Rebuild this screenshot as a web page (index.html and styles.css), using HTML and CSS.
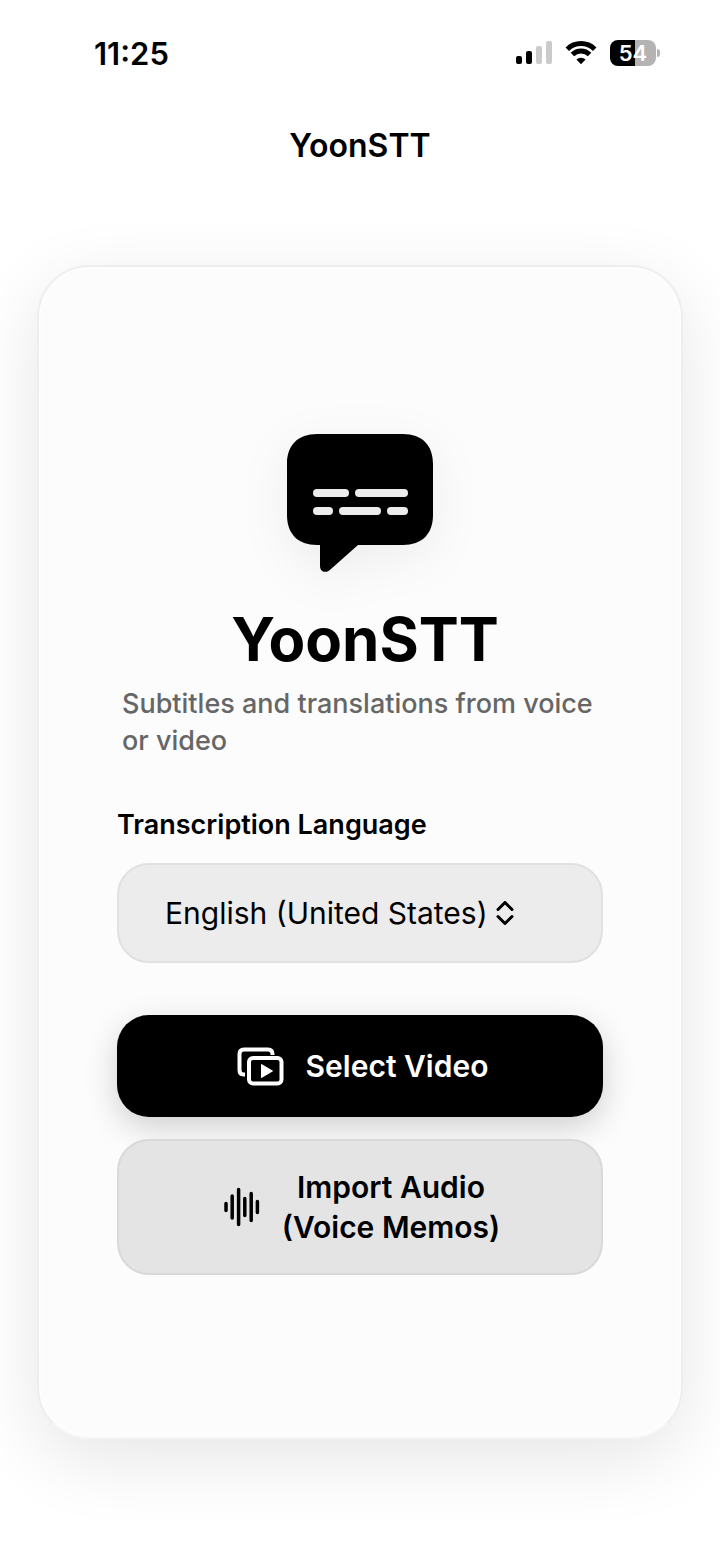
FILE: index.html
```html
<!DOCTYPE html>
<html lang="en">
<head>
    <meta charset="UTF-8">
    <meta name="viewport" content="width=device-width, initial-scale=1.0">
    <title>YoonSTT</title>
    <link rel="stylesheet" href="styles.css">
</head>
<body>

    <div class="status-bar">
        <span class="time">11:25</span>
        <div class="status-icons">
            <svg width="36" height="24" viewBox="0 0 36 24" aria-hidden="true">
                <rect x="0" y="15" width="6" height="8" rx="2"/>
                <rect x="10" y="10" width="6" height="13" rx="2"/>
                <rect class="dim" x="20" y="5" width="6" height="18" rx="2"/>
                <rect class="dim" x="30" y="0" width="6" height="23" rx="2"/>
            </svg>
            <svg class="wifi" width="32" height="24" viewBox="0 0 32 24" aria-hidden="true">
                <path class="arc" d="M2.3 8.2a19.6 19.6 0 0 1 27.4 0M7.4 13.6a12.2 12.2 0 0 1 17.2 0"/>
                <path d="M16 23.2l-4.6-4.6a6.6 6.6 0 0 1 9.200 0z"/>
            </svg>
            <div class="battery">
                <span class="battery-level">54</span>
            </div>
        </div>
    </div>

    <header class="nav-bar">YoonSTT</header>

    <main>
        <div class="card">
            <svg class="logo" width="148" height="140" viewBox="0 0 148 140" aria-hidden="true">
                <path d="M31 1H117C136 1 147 12 147 31V82C147 101 136 112 117 112H72L45 136C40 141 34 139 34 133V112H31C12 112 1 101 1 82V31C1 12 12 1 31 1Z"/>
                <g class="logo-lines">
                    <rect x="27" y="56" width="36" height="8" rx="4"/>
                    <rect x="69" y="56" width="53" height="8" rx="4"/>
                    <rect x="27" y="74" width="20" height="8" rx="4"/>
                    <rect x="53" y="74" width="42" height="8" rx="4"/>
                    <rect x="101" y="74" width="21" height="8" rx="4"/>
                </g>
            </svg>
            <h1>YoonSTT</h1>
            <p class="subtitle">Subtitles and translations from voice or video</p>

            <label for="language">Transcription Language</label>
            <div class="select-box">
                <select id="language" name="language">
                    <option>English (United States)</option>
                </select>
                <svg width="18" height="24" viewBox="0 0 18 24" aria-hidden="true">
                    <path d="M2 8.500L9 1.500L16 8.500M2 15.500L9 22.500L16 15.500"/>
                </svg>
            </div>

            <button type="button" class="btn btn-primary">
                <svg width="48" height="40" viewBox="0 0 48 40" aria-hidden="true">
                    <path class="frame" d="M9 28.500H7.500Q3.500 28.500 3.500 24V8Q3.500 3.500 8 3.500H32Q36.500 3.500 36.500 8V9"/>
                    <rect class="frame" x="13" y="12" width="32.500" height="25.500" rx="4"/>
                    <path class="play" d="M25.500 18.500V31.500L36.500 25Z"/>
                </svg>
                <span>Select Video</span>
            </button>
            <button type="button" class="btn btn-secondary">
                <svg width="36" height="40" viewBox="0 0 36 40" aria-hidden="true">
                    <path class="wave" d="M2 16.500V23.500M8.200 9V31M14.600 2.500V37.500M20.800 11.500V28.500M27.200 6.500V33.500M33.400 14.500V25.500"/>
                </svg>
                <span>Import Audio<br>(Voice Memos)</span>
            </button>
        </div>
    </main>

</body>
</html>
```
FILE: styles.css
```css
* {
    box-sizing: border-box;
}

body {
    margin: 0;
    font-family: Inter, "Liberation Sans", sans-serif;
    background: #fff;
    color: #000;
}

/* Status Bar */
.status-bar {
    display: flex;
    justify-content: space-between;
    align-items: center;
    height: 106px;
    padding: 0 60px 0 94px;
}

.time {
    font-size: 31px;
    font-weight: 600;
}

.status-icons {
    display: flex;
    align-items: center;
    gap: 13px;
}

.dim {
    fill: #cbcbcb;
}

.arc {
    fill: none;
    stroke: #000;
    stroke-width: 5;
}

/* Battery, filled to 54% */
.battery {
    position: relative;
    width: 46px;
    height: 26px;
    margin-right: 4px;
    border-radius: 8px;
    background: linear-gradient(to right, #000 54%, #b3b3b3 54%);
}

.battery::after {
    content: "";
    position: absolute;
    right: -4px;
    top: 9px;
    width: 3px;
    height: 8px;
    border-radius: 0 4px 4px 0;
    background: #b3b3b3;
}

.battery-level {
    display: block;
    text-align: center;
    color: #fff;
    font-size: 22px;
    font-weight: 600;
    line-height: 26px;
}

/* Title Bar */
.nav-bar {
    height: 80px;
    line-height: 80px;
    text-align: center;
    font-size: 32px;
    font-weight: 600;
}

main {
    padding: 79px 37px 122px;
}

/* Card */
.card {
    display: flex;
    flex-direction: column;
    padding: 166px 78px 162px;
    border: 2px solid #eee;
    border-bottom-color: #f6f6f6;
    border-radius: 52px;
    background: #fcfcfc;
    box-shadow: 0 20px 72px rgba(0, 0, 0, 0.1), inset 0 0 8px #fff;
}

.logo {
    align-self: center;
    filter: drop-shadow(0 12px 24px rgba(0, 0, 0, 0.06));
}

.logo-lines {
    fill: #ececec;
}

h1 {
    margin: 30px 0 10px;
    padding-left: 10px;
    text-align: center;
    font-size: 60px;
    line-height: 72px;
}

.subtitle {
    margin: 0 5px 48px;
    color: #666;
    font-size: 27px;
    font-weight: 500;
    line-height: 37px;
}

label {
    margin-bottom: 20px;
    font-size: 27px;
    font-weight: 600;
    line-height: 36px;
}

/* Language Select */
.select-box {
    display: flex;
    align-items: center;
    gap: 8px;
    height: 100px;
    margin-bottom: 52px;
    padding-left: 46px;
    border: 2px solid #e1e1e1;
    border-radius: 32px;
    background: #ececec;
}

select {
    appearance: none;
    padding: 0;
    border: none;
    background: none;
    color: #000;
    font-family: inherit;
    font-size: 30px;
    line-height: 40px;
}

.select-box path {
    fill: none;
    stroke: #000;
    stroke-width: 3;
    stroke-linecap: round;
    stroke-linejoin: round;
}

/* Buttons */
.btn {
    display: flex;
    justify-content: center;
    align-items: center;
    gap: 22px;
    min-height: 102px;
    padding: 0 4px 0 8px;
    border: none;
    border-radius: 32px;
    font-family: inherit;
    font-size: 30px;
    font-weight: 600;
    line-height: 40px;
    cursor: pointer;
}

.btn-primary {
    margin-bottom: 22px;
    background: #000;
    color: #fff;
    box-shadow: 0 10px 32px rgba(0, 0, 0, 0.18);
}

.btn-secondary {
    min-height: 136px;
    border: 2px solid #d9d9d9;
    background: #e4e4e4;
    color: #000;
}

.frame {
    fill: none;
    stroke: #fff;
    stroke-width: 4;
}

.play {
    fill: #fff;
    stroke: #fff;
    stroke-linejoin: round;
}

.wave {
    fill: none;
    stroke: #000;
    stroke-width: 3.5;
    stroke-linecap: round;
}
```
